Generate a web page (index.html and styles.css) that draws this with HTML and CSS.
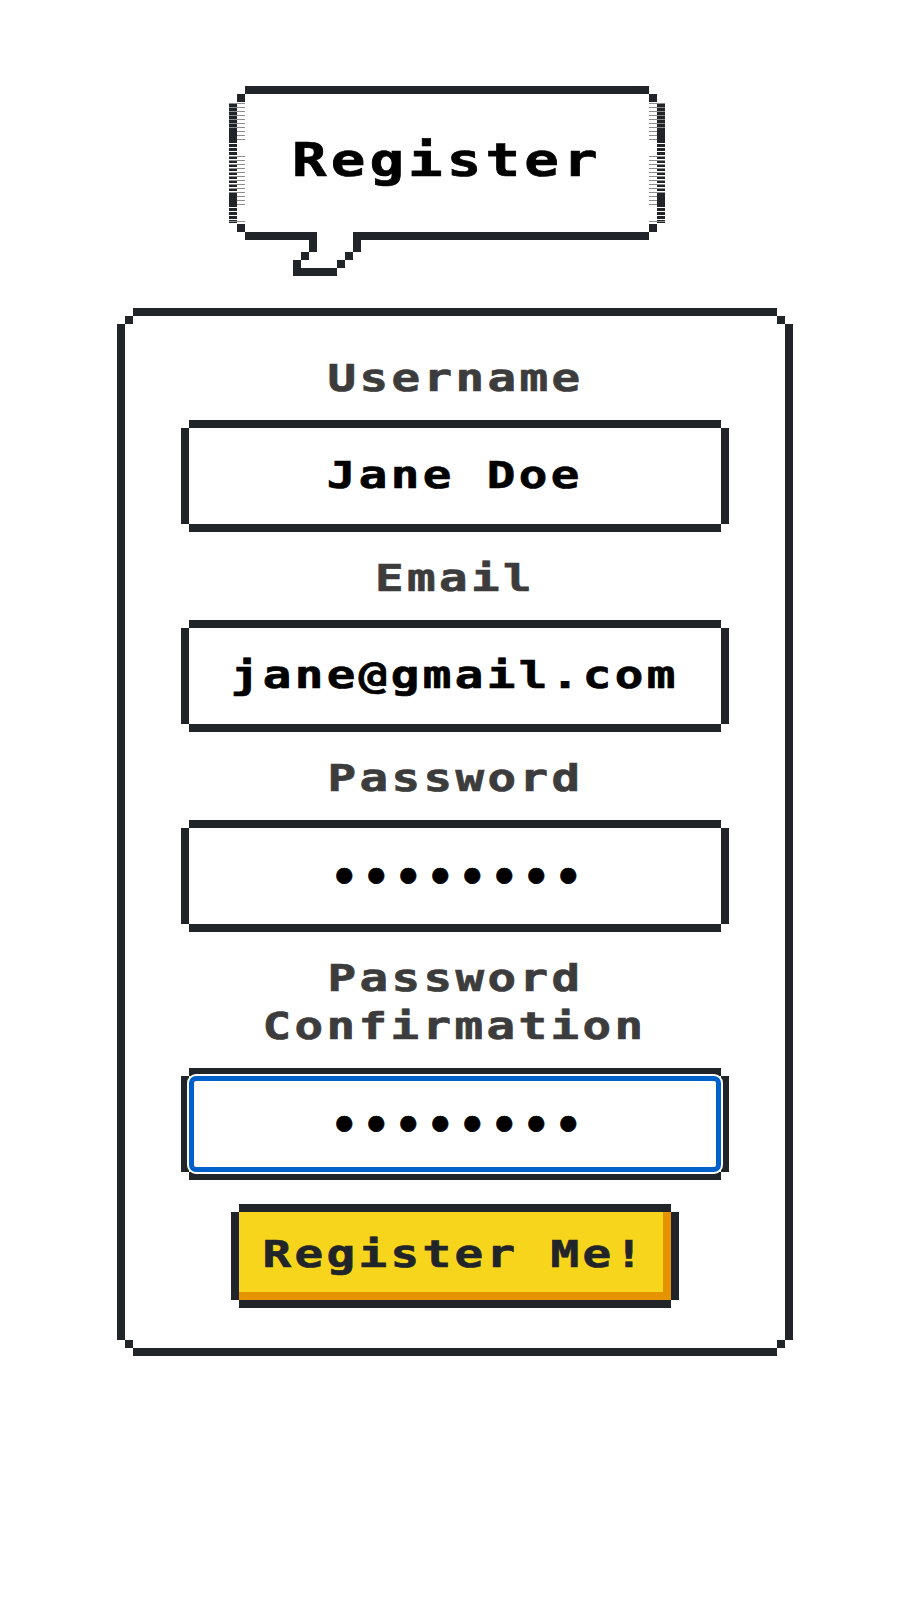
FILE: index.html
```html
<!DOCTYPE html>
<html lang="en">
<head>
<meta charset="utf-8">
<title>Register</title>
<link rel="stylesheet" href="styles.css">
</head>
<body>
<main class="page">
  <header class="balloon">
    <h1 class="balloon-title"><span class="wide">Register</span></h1>
    <svg class="balloon-tail" width="68" height="44" viewBox="0 0 68 44" shape-rendering="crispEdges" aria-hidden="true">
      <rect x="24" y="0" width="36" height="8" fill="#fff"/>
      <g fill="#212529">
        <rect x="16" y="0" width="8" height="20"/>
        <rect x="8" y="20" width="8" height="8"/>
        <rect x="0" y="28" width="8" height="16"/>
        <rect x="0" y="36" width="44" height="8"/>
        <rect x="44" y="28" width="8" height="8"/>
        <rect x="52" y="20" width="8" height="8"/>
        <rect x="60" y="0" width="8" height="20"/>
      </g>
    </svg>
  </header>
  <form class="card">
    <div class="field">
      <label class="field-label" for="username"><span class="wide">Username</span></label>
      <div class="field-box"><input class="field-input" id="username" type="text" value="Jane Doe"></div>
    </div>
    <div class="field">
      <label class="field-label" for="email"><span class="wide">Email</span></label>
      <div class="field-box"><input class="field-input" id="email" type="text" value="jane@gmail.com"></div>
    </div>
    <div class="field">
      <label class="field-label" for="password"><span class="wide">Password</span></label>
      <div class="field-box"><input class="field-secret" id="password" type="password" value="password"></div>
    </div>
    <div class="field">
      <label class="field-label" for="confirm"><span class="wide">Password</span><br><span class="wide">Confirmation</span></label>
      <div class="field-box"><input class="field-secret is-focused" id="confirm" type="password" value="password"></div>
    </div>
    <button class="submit" type="button"><span class="wide">Register Me!</span></button>
  </form>
</main>
</body>
</html>
```
FILE: styles.css
```css
* { box-sizing: border-box; }

:root {
  --ink: #212529;
  --stripe-gray: #8c8c8c;
}

html, body {
  margin: 0;
  background: #fff;
}

body {
  font-family: "DejaVu Sans Mono", "Liberation Mono", monospace;
  font-weight: 700;
  font-size: 38px;
  letter-spacing: 2.72px;
  -webkit-text-stroke: 0.7px currentColor;
}

.page {
  display: flex;
  flex-direction: column;
  align-items: flex-start;
  min-height: 1600px;
  padding: 102px 0 0 133px;
}

.wide {
  display: inline-block;
  transform: scaleX(1.25);
  white-space: pre;
}

/* Speech balloon */
.balloon {
  position: relative;
  width: 404px;
  height: 122px;
  margin-left: 112px;
  display: flex;
  align-items: center;
  justify-content: center;
  padding-bottom: 7px;
  box-shadow:
    0 -8px 0 #fff, 0 8px 0 #fff, -8px 0 0 #fff, 8px 0 0 #fff,
    -8px -8px 0 var(--ink), 8px -8px 0 var(--ink),
    -8px 8px 0 var(--ink), 8px 8px 0 var(--ink),
    0 -16px 0 var(--ink), 0 16px 0 var(--ink);
}

.balloon::before,
.balloon::after {
  content: "";
  position: absolute;
  top: 0;
  width: 16px;
  height: 122px;
  background-repeat: no-repeat;
  background-image:
    linear-gradient(var(--ink), var(--ink)),
    linear-gradient(var(--ink), var(--ink)),
    repeating-linear-gradient(var(--stripe-gray) 0 1px, transparent 1px 4px),
    repeating-linear-gradient(var(--stripe-gray) 0 1px, transparent 1px 4px),
    linear-gradient(var(--stripe-gray), var(--stripe-gray)),
    repeating-linear-gradient(var(--ink) 0 3px, transparent 3px 4px);
  background-size:
    8px 13px,
    8px 13px,
    100% 40px,
    100% 52px,
    100% 1px,
    8px 120px;
  background-position:
    var(--side) 26px,
    var(--side) 91px,
    0 1px,
    0 54px,
    0 119px,
    var(--side) 2px;
}

.balloon::before { left: -16px; --side: 0; }
.balloon::after { right: -16px; --side: 100%; }

.balloon-title {
  margin: 0;
  font-size: 46px;
  font-weight: 700;
  letter-spacing: 3.26px;
  line-height: 58px;
  color: #000;
}

.balloon-tail {
  position: absolute;
  left: 48px;
  top: 130px;
}

/* Form card */
.card {
  width: 644px;
  height: 1016px;
  margin-top: 100px;
  padding: 30px 56px 0;
  display: flex;
  flex-direction: column;
  align-items: center;
  box-shadow:
    0 -8px 0 #fff, 0 8px 0 #fff, -8px 0 0 #fff, 8px 0 0 #fff,
    -8px -8px 0 var(--ink), 8px -8px 0 var(--ink),
    -8px 8px 0 var(--ink), 8px 8px 0 var(--ink),
    0 -16px 0 var(--ink), 0 16px 0 var(--ink),
    -16px 0 0 var(--ink), 16px 0 0 var(--ink);
}

.field {
  width: 532px;
  margin-bottom: 30px;
}

.field-label {
  display: block;
  margin-bottom: 26px;
  line-height: 48px;
  text-align: center;
  color: #3c3c3c;
}

.field-box {
  display: flex;
  justify-content: center;
  height: 96px;
  box-shadow:
    0 -8px 0 var(--ink), 0 8px 0 var(--ink),
    -8px 0 0 var(--ink), 8px 0 0 var(--ink);
}

.field-input,
.field-secret {
  height: 96px;
  margin: 0;
  border: 0;
  outline: 0;
  background: transparent;
  color: #000;
  font: inherit;
  text-align: center;
  caret-color: transparent;
}

.field-input {
  flex: none;
  width: 425.6px;
  padding: 0 0 3px;
  letter-spacing: 2.72px;
  transform: scaleX(1.25);
}

.field-secret {
  width: 532px;
  padding: 0 0 0 8px;
  font-size: 44px;
  letter-spacing: 5.5px;
}

.is-focused {
  border: 5px solid #0060cc;
  border-radius: 7px;
  box-shadow: 0 0 0 2px #fff;
}

/* Submit button */
.submit {
  width: 432px;
  height: 88px;
  margin: 10px 0 0;
  padding: 0 0 4px;
  border: 0;
  background: #f7d51d;
  color: var(--ink);
  font: inherit;
  letter-spacing: 2.72px;
  box-shadow:
    inset -8px -8px 0 #e59400,
    0 -8px 0 var(--ink), 0 8px 0 var(--ink),
    -8px 0 0 var(--ink), 8px 0 0 var(--ink);
}
```
